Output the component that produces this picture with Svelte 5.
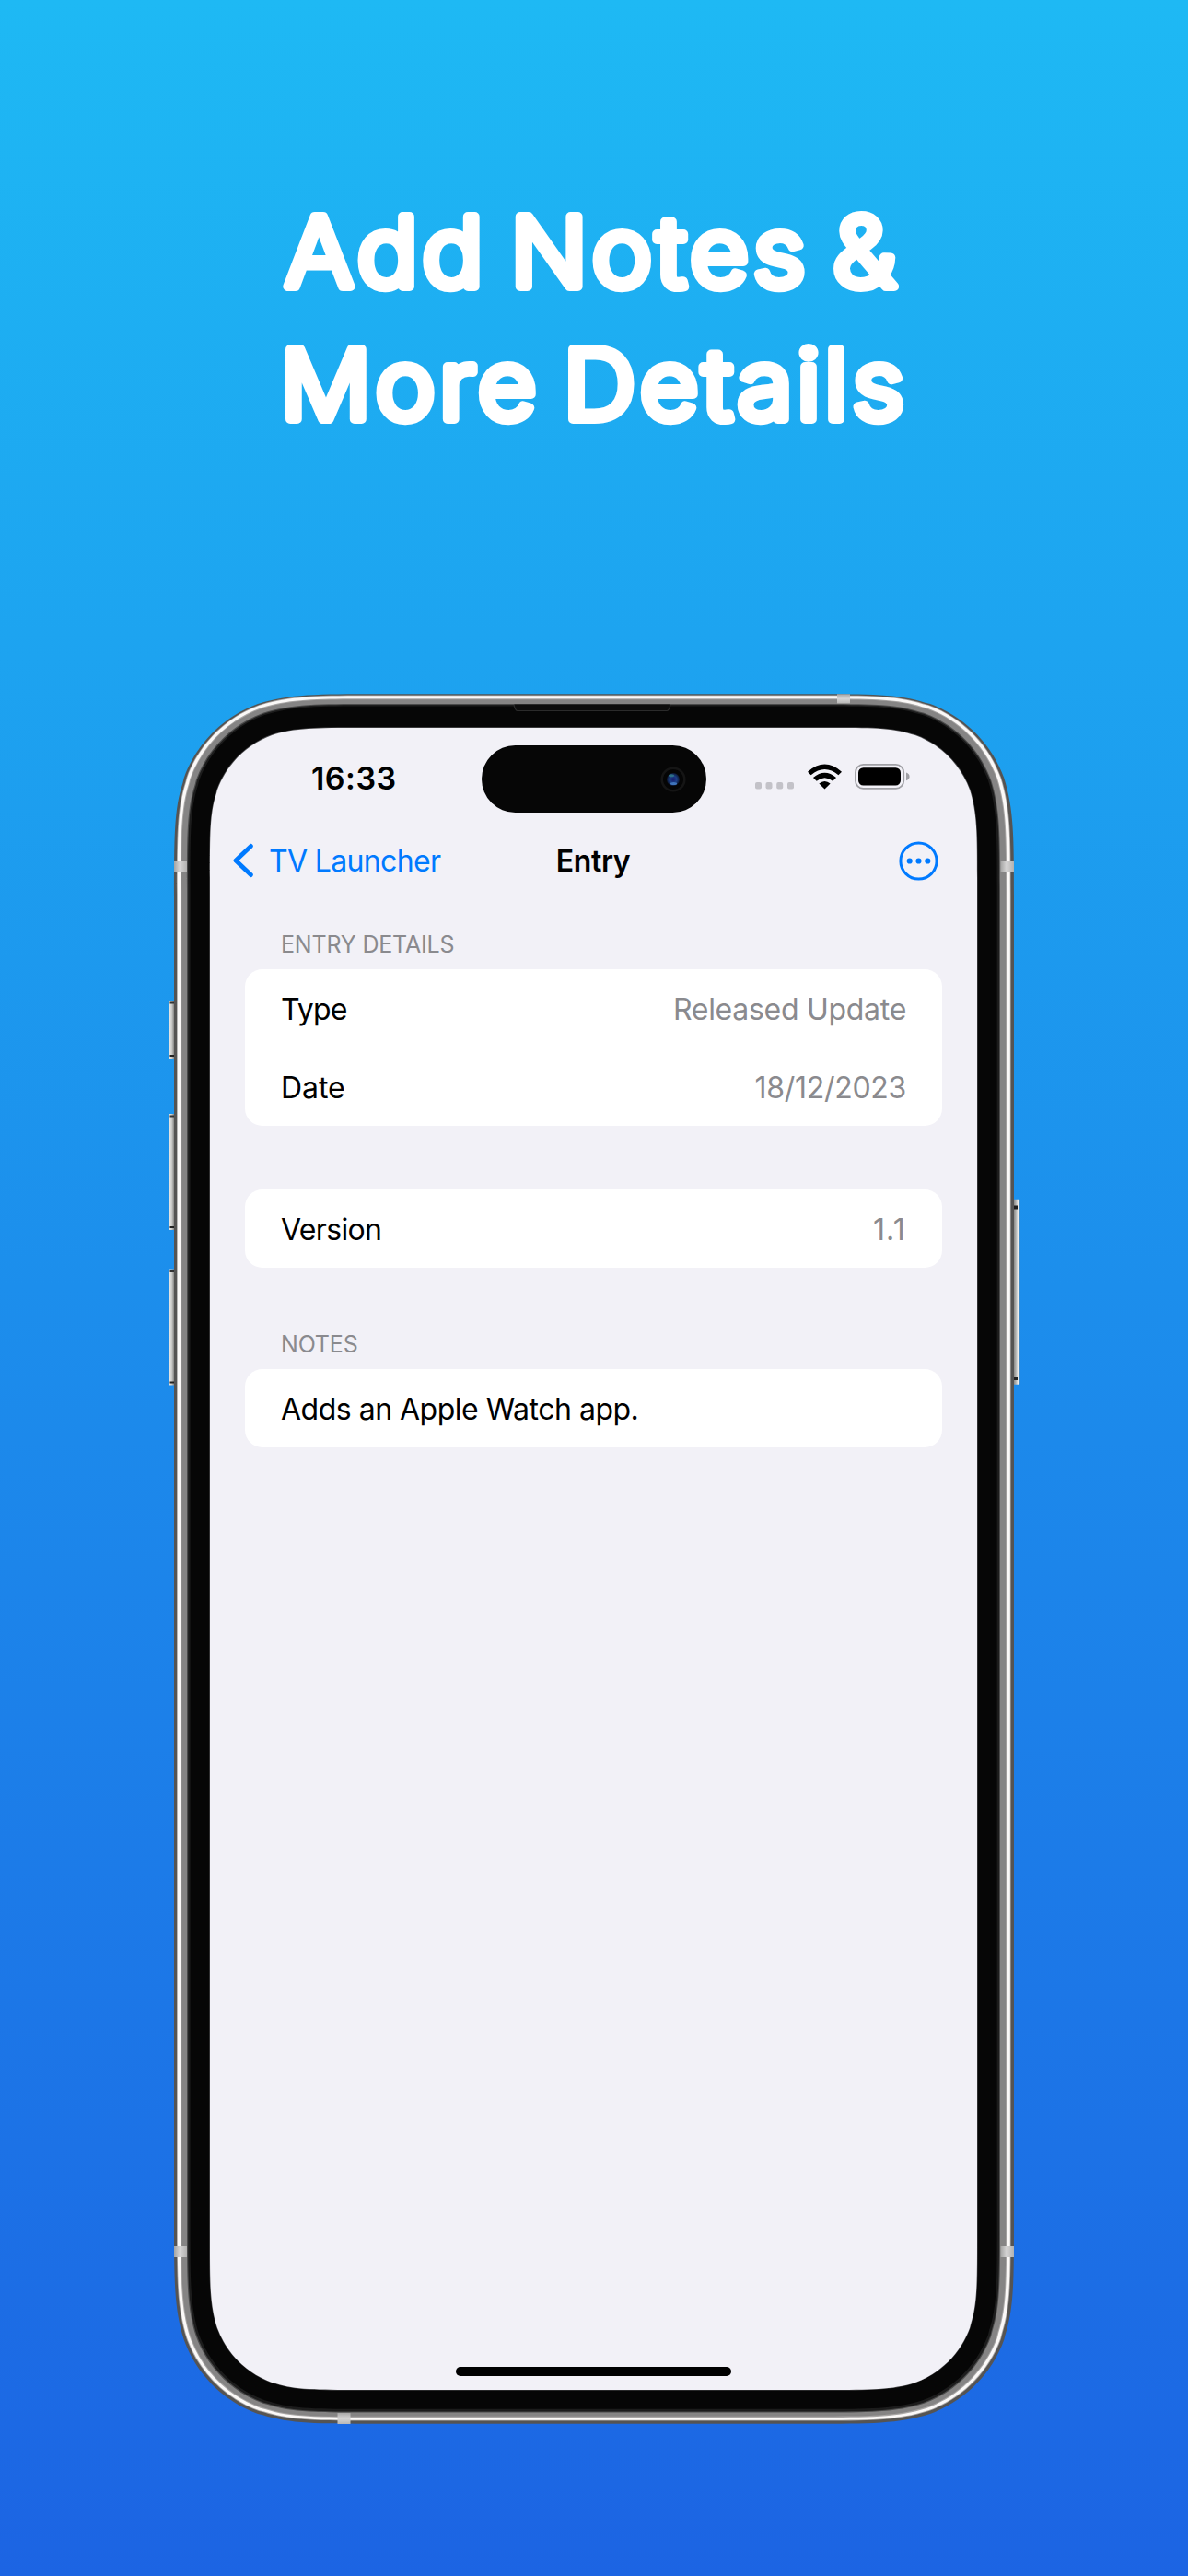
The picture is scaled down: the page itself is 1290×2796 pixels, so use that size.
<script>
  // Rounded rectangle with continuous-curvature corners.
  // l/t/r/b are the edges, k is the nominal corner radius.
  function squircle(l, t, r, b, k) {
    const p = (sx, sy, x, y) => `${(x + sx * k).toFixed(2)} ${(y + sy * k).toFixed(2)}`;
    const A = 1.52866, B = 1.08849, C = 0.86841, D = 0.66993, E = 0.0655;
    const F = 0.63149, G = 0.07491, H = 0.37282, I = 0.16906;
    return [
      `M${p(A, 0, l, t)}`,
      `L${p(-A, 0, r, t)}`,
      `C${p(-B, 0, r, t)} ${p(-C, 0, r, t)} ${p(-D, E, r, t)}`,
      `L${p(-F, G, r, t)}`,
      `C${p(-H, I, r, t)} ${p(-I, H, r, t)} ${p(-G, F, r, t)}`,
      `C${p(0, C, r, t)} ${p(0, B, r, t)} ${p(0, A, r, t)}`,
      `L${p(0, -A, r, b)}`,
      `C${p(0, -B, r, b)} ${p(0, -C, r, b)} ${p(-E, -D, r, b)}`,
      `L${p(-G, -F, r, b)}`,
      `C${p(-I, -H, r, b)} ${p(-H, -I, r, b)} ${p(-F, -G, r, b)}`,
      `C${p(-C, 0, r, b)} ${p(-B, 0, r, b)} ${p(-A, 0, r, b)}`,
      `L${p(A, 0, l, b)}`,
      `C${p(B, 0, l, b)} ${p(C, 0, l, b)} ${p(D, -E, l, b)}`,
      `L${p(F, -G, l, b)}`,
      `C${p(H, -I, l, b)} ${p(I, -H, l, b)} ${p(G, -F, l, b)}`,
      `C${p(0, -C, l, b)} ${p(0, -B, l, b)} ${p(0, -A, l, b)}`,
      `L${p(0, A, l, t)}`,
      `C${p(0, B, l, t)} ${p(0, C, l, t)} ${p(E, D, l, t)}`,
      `L${p(G, F, l, t)}`,
      `C${p(I, H, l, t)} ${p(H, I, l, t)} ${p(F, G, l, t)}`,
      `C${p(C, 0, l, t)} ${p(B, 0, l, t)} ${p(A, 0, l, t)}`,
      'Z'
    ].join(' ');
  }

  // Frame layers from the outer steel edge inwards to the display.
  const layers = [
    { fill: '#555453', d: squircle(0, 0.3, 912, 1877.7, 144) },
    { fill: '#a9a7a6', d: squircle(3, 1.6, 908.6, 1874.6, 141) },
    { fill: '#fbf9f8', d: squircle(3.8, 2.2, 907.8, 1873.8, 140.5) },
    { fill: '#a9a7a6', d: squircle(7.2, 5.2, 904.2, 1870.9, 137) },
    { fill: '#858484', d: squircle(8.2, 6.2, 903.2, 1869.8, 136) },
    { fill: '#4a4a4a', d: squircle(14, 10.9, 897, 1865.6, 131) },
    { fill: '#1c1c1c', d: squircle(15.2, 12, 896, 1864.4, 130) },
    { fill: '#060606', d: squircle(17.6, 13.4, 893.6, 1861.8, 128) },
    { fill: '#4c4c4e', d: squircle(38.4, 36.2, 872.6, 1841.4, 107) },
    { fill: '#f2f1f7', d: squircle(39, 37, 872, 1841, 106.5) }
  ];

  const leftKeys = [
    { y: 333, h: 63 },
    { y: 456, h: 126 },
    { y: 624.5, h: 126 }
  ];

  const groups = [
    {
      header: 'Entry Details',
      rows: [
        { label: 'Type', fit: 'tighter', value: 'Released Update', valueFit: 'close' },
        { label: 'Date', fit: 'even', value: '18/12/2023', valueFit: 'close' }
      ]
    },
    { rows: [{ label: 'Version', fit: 'tight', value: '1.1', valueFit: 'open' }] },
    { header: 'Notes', rows: [{ label: 'Adds an Apple Watch app.', fit: 'snug' }] }
  ];
</script>

<main class="page">
  <h1 class="headline">
    <svg width="760" height="320" viewBox="265 200 760 320">
      <g transform="translate(309 311) scale(1.05 1)">
        <text class="line first" x="0.5" y="0">Add Notes &amp;</text>
      </g>
      <g transform="translate(309 455) scale(1.045 1)">
        <text class="line second" x="-4" y="0">More Details</text>
      </g>
    </svg>
  </h1>

  <section class="phone">
    <svg class="frame" width="930" height="1880" viewBox="-9 -1 930 1880" aria-hidden="true">
      <defs>
        <linearGradient id="keyL" x1="0" x2="1" y1="0" y2="0">
          <stop offset="0" stop-color="#8a8a88" />
          <stop offset=".2" stop-color="#e4e4e2" />
          <stop offset=".5" stop-color="#c9c9c7" />
          <stop offset="1" stop-color="#6d6d6b" />
        </linearGradient>
        <linearGradient id="keyR" x1="1" x2="0" y1="0" y2="0">
          <stop offset="0" stop-color="#8a8a88" />
          <stop offset=".25" stop-color="#eeeeec" />
          <stop offset=".5" stop-color="#bdbdbb" />
          <stop offset="1" stop-color="#767674" />
        </linearGradient>
        <linearGradient id="bandH" x1="0" x2="1" y1="0" y2="0">
          <stop offset="0" stop-color="#a3a3a2" />
          <stop offset=".45" stop-color="#d6d5d5" />
          <stop offset="1" stop-color="#b3b2b1" />
        </linearGradient>
        <linearGradient id="bandV" x1="0" x2="0" y1="0" y2="1">
          <stop offset="0" stop-color="#a9a8a8" />
          <stop offset=".5" stop-color="#d6d5d5" />
          <stop offset="1" stop-color="#b9b8b7" />
        </linearGradient>
      </defs>

      {#each leftKeys as key}
        <rect x="-6" y={key.y} width="7" height={key.h} rx="1.5" fill="url(#keyL)" />
        <rect x="-4.5" y={key.y + 1.5} width="5" height="2" fill="#333" />
        <rect x="-4.5" y={key.y + key.h - 4} width="5" height="2" fill="#222" />
      {/each}
      <rect x="911" y="548.7" width="7.3" height="201" rx="1.5" fill="url(#keyR)" />
      <rect x="911" y="555.5" width="5" height="4" fill="#1d1d1d" />
      <rect x="911" y="742" width="5" height="3" fill="#222" />

      {#each layers as layer}
        <path d={layer.d} fill={layer.fill} />
      {/each}

      <path d="M369.5 11.5 q1 6.5 4 6.5 H534 q3 0 4 -6.5 Z" fill="#0d0d0d" />
      <path d="M369 12 q1.5 6.5 4 6.5 H535 q2.5 0 4 -6.5" fill="none" stroke="#2b2b2b" stroke-width="1.2" />

      <rect x="0" y="181.6" width="14" height="12" fill="url(#bandH)" />
      <rect x="897.5" y="181.6" width="14.5" height="12" fill="url(#bandH)" />
      <rect x="0" y="1685" width="14" height="12" fill="url(#bandH)" />
      <rect x="897.5" y="1685" width="14.5" height="12" fill="url(#bandH)" />
      <rect x="720" y="0.3" width="14" height="10" fill="url(#bandV)" />
      <rect x="177.5" y="1866" width="14" height="12" fill="url(#bandV)" />
    </svg>

    <div class="screen">
      <div class="status">
        <span class="clock">16:33</span>
        <div class="island">
          <svg width="28" height="28" viewBox="0 0 28 28">
            <defs>
              <radialGradient id="lens" cx=".5" cy=".5" r=".5">
                <stop offset="0" stop-color="#161a6e" />
                <stop offset=".55" stop-color="#1b3f86" />
                <stop offset="1" stop-color="#0b1630" />
              </radialGradient>
            </defs>
            <circle cx="14" cy="14" r="12.3" fill="#050505" stroke="#151515" stroke-width="2.6" />
            <circle cx="14" cy="14" r="7" fill="url(#lens)" />
            <ellipse cx="12" cy="9.8" rx="3" ry="1.5" fill="#2d6f86" />
            <ellipse cx="14.5" cy="18.5" rx="3.6" ry="1.5" fill="#3f74bb" />
          </svg>
        </div>
        <div class="indicators">
          <svg width="42" height="28" viewBox="0 0 42 28" fill="#c3c2c8">
            <rect x="0" y="20" width="7" height="7.5" rx="2" />
            <rect x="11.5" y="20" width="7" height="7.5" rx="2" />
            <rect x="23.2" y="20" width="7" height="7.5" rx="2" />
            <rect x="35" y="20" width="7" height="7.5" rx="2" />
          </svg>
          <svg width="37" height="28" viewBox="0 0 37 28">
            <path d="M18.5 27.5 L12.4 21.5 Q18.5 16.3 24.6 21.5 Z" />
            <path d="M6 15.1 Q18.5 4.6 31 15.1 L27.3 18.8 Q18.5 11.6 9.7 18.8 Z" />
            <path d="M0 8.7 Q18.5 -7.7 37 8.7 L33.4 12.3 Q18.5 -0.4 3.6 12.3 Z" />
          </svg>
          <svg width="60" height="28" viewBox="0 0 60 28">
            <rect x=".9" y=".9" width="52.4" height="26" rx="8.5" fill="none" stroke="#a0a0a5" stroke-width="1.7" />
            <rect x="4" y="4.2" width="46" height="19.4" rx="5.5" />
            <path d="M56 9.5 Q59.6 11 59.6 13.9 Q59.6 16.8 56 18.3 Z" fill="#a0a0a5" />
          </svg>
        </div>
      </div>

      <nav class="nav">
        <div class="back">
          <svg width="22" height="38" viewBox="0 0 22 38">
            <path d="M19.4 3.4 L3 19 L19.4 34.6" fill="none" stroke="#007aff" stroke-width="4.8" stroke-linecap="round" stroke-linejoin="round" />
          </svg>
          <span>TV Launcher</span>
        </div>
        <strong class="title">Entry</strong>
        <svg class="more" width="43" height="43" viewBox="0 0 43 43">
          <circle cx="21.5" cy="21.5" r="19.6" fill="none" stroke="#007aff" stroke-width="3" />
          <g fill="#007aff">
            <circle cx="11.7" cy="21.5" r="3.1" />
            <circle cx="21.5" cy="21.5" r="3.1" />
            <circle cx="31.3" cy="21.5" r="3.1" />
          </g>
        </svg>
      </nav>

      <div class="list">
        {#each groups as group}
          <section class="group">
            {#if group.header}<h2>{group.header}</h2>{/if}
            <div class="card">
              {#each group.rows as row}
                <div class="row">
                  <span class={row.fit}>{row.label}</span>
                  {#if row.value}<span class="value {row.valueFit}">{row.value}</span>{/if}
                </div>
              {/each}
            </div>
          </section>
        {/each}
      </div>

      <div class="home"></div>
    </div>
  </section>
</main>

<style>
  :global(body) {
    margin: 0;
  }
  .page {
    box-sizing: border-box;
    width: 1290px;
    height: 2796px;
    padding-top: 200px;
    display: flex;
    flex-direction: column;
    align-items: center;
    overflow: hidden;
    background: linear-gradient(180deg, #1eb9f4 0%, #1c8eec 50%, #1c64e3 100%);
    font-family: Inter, 'Liberation Sans', sans-serif;
    color: #000;
  }
  .headline {
    margin: 0;
    height: 553px;
  }
  .headline svg {
    display: block;
  }
  .line {
    font-size: 104.5px;
    font-weight: 300;
    fill: #fff;
    stroke: #fff;
    stroke-width: 10px;
    stroke-linejoin: round;
    word-spacing: -10px;
  }
  .first {
    letter-spacing: 4.6px;
  }
  .second {
    letter-spacing: 4.4px;
  }
  .phone {
    position: relative;
    box-sizing: border-box;
    width: 912px;
    height: 1878px;
    padding: 37px 40px 37px 39px;
    flex: none;
  }
  .frame {
    position: absolute;
    left: -9px;
    top: -1px;
  }
  .screen {
    position: relative;
    height: 100%;
    display: flex;
    flex-direction: column;
  }
  .status {
    display: grid;
    grid-template-columns: 295px 244px 1fr;
    align-items: center;
    height: 73px;
    margin-top: 19px;
  }
  .clock {
    padding-left: 110px;
    margin-top: -3px;
    font-size: 34px;
    font-weight: 600;
    letter-spacing: 0.48px;
  }
  .island {
    box-sizing: border-box;
    height: 73px;
    padding-right: 22px;
    border-radius: 37px;
    background: #060606;
    display: flex;
    align-items: center;
    justify-content: flex-end;
  }
  .indicators {
    display: flex;
    gap: 14.7px;
    padding-left: 53px;
    margin-top: -5px;
  }
  .nav {
    height: 104px;
    padding: 0 42.5px 0 24.5px;
    display: grid;
    grid-template-columns: 1fr 80px 1fr;
    align-items: center;
    font-size: 32px;
  }
  .back {
    display: flex;
    align-items: center;
    gap: 17.5px;
    color: #007aff;
    letter-spacing: -0.65px;
    white-space: nowrap;
  }
  .title {
    font-weight: 600;
    letter-spacing: -0.4px;
    justify-self: center;
    transform: translateX(8.5px);
  }
  .more {
    justify-self: end;
  }
  .list {
    padding: 0 38px;
  }
  .group + .group {
    margin-top: 69px;
  }
  h2 {
    margin: 0;
    padding: 24px 39px 12px;
    font-size: 25px;
    font-weight: 400;
    line-height: 30px;
    letter-spacing: -0.18px;
    text-transform: uppercase;
    color: #8a8a8e;
  }
  .group + .group h2 {
    padding-top: 0;
    margin-top: -1px;
  }
  .card {
    border-radius: 19px;
    background: #fff;
  }
  .row {
    box-sizing: border-box;
    height: 85px;
    margin-left: 39px;
    padding: 1px 39px 0 0;
    display: flex;
    align-items: center;
    justify-content: space-between;
    font-size: 32px;
  }
  .row + .row {
    padding-top: 0;
    border-top: 1px solid #d9d9db;
  }
  .value {
    color: #8a8a8e;
  }
  .tighter {
    letter-spacing: -0.8px;
  }
  .tight {
    letter-spacing: -0.65px;
  }
  .snug {
    letter-spacing: -0.5px;
  }
  .close {
    letter-spacing: -0.29px;
  }
  .even {
    letter-spacing: -0.07px;
  }
  .open {
    letter-spacing: 1.2px;
  }
  .home {
    width: 299px;
    height: 10px;
    margin: auto auto 15px;
    border-radius: 5px;
    background: #000;
  }
</style>
